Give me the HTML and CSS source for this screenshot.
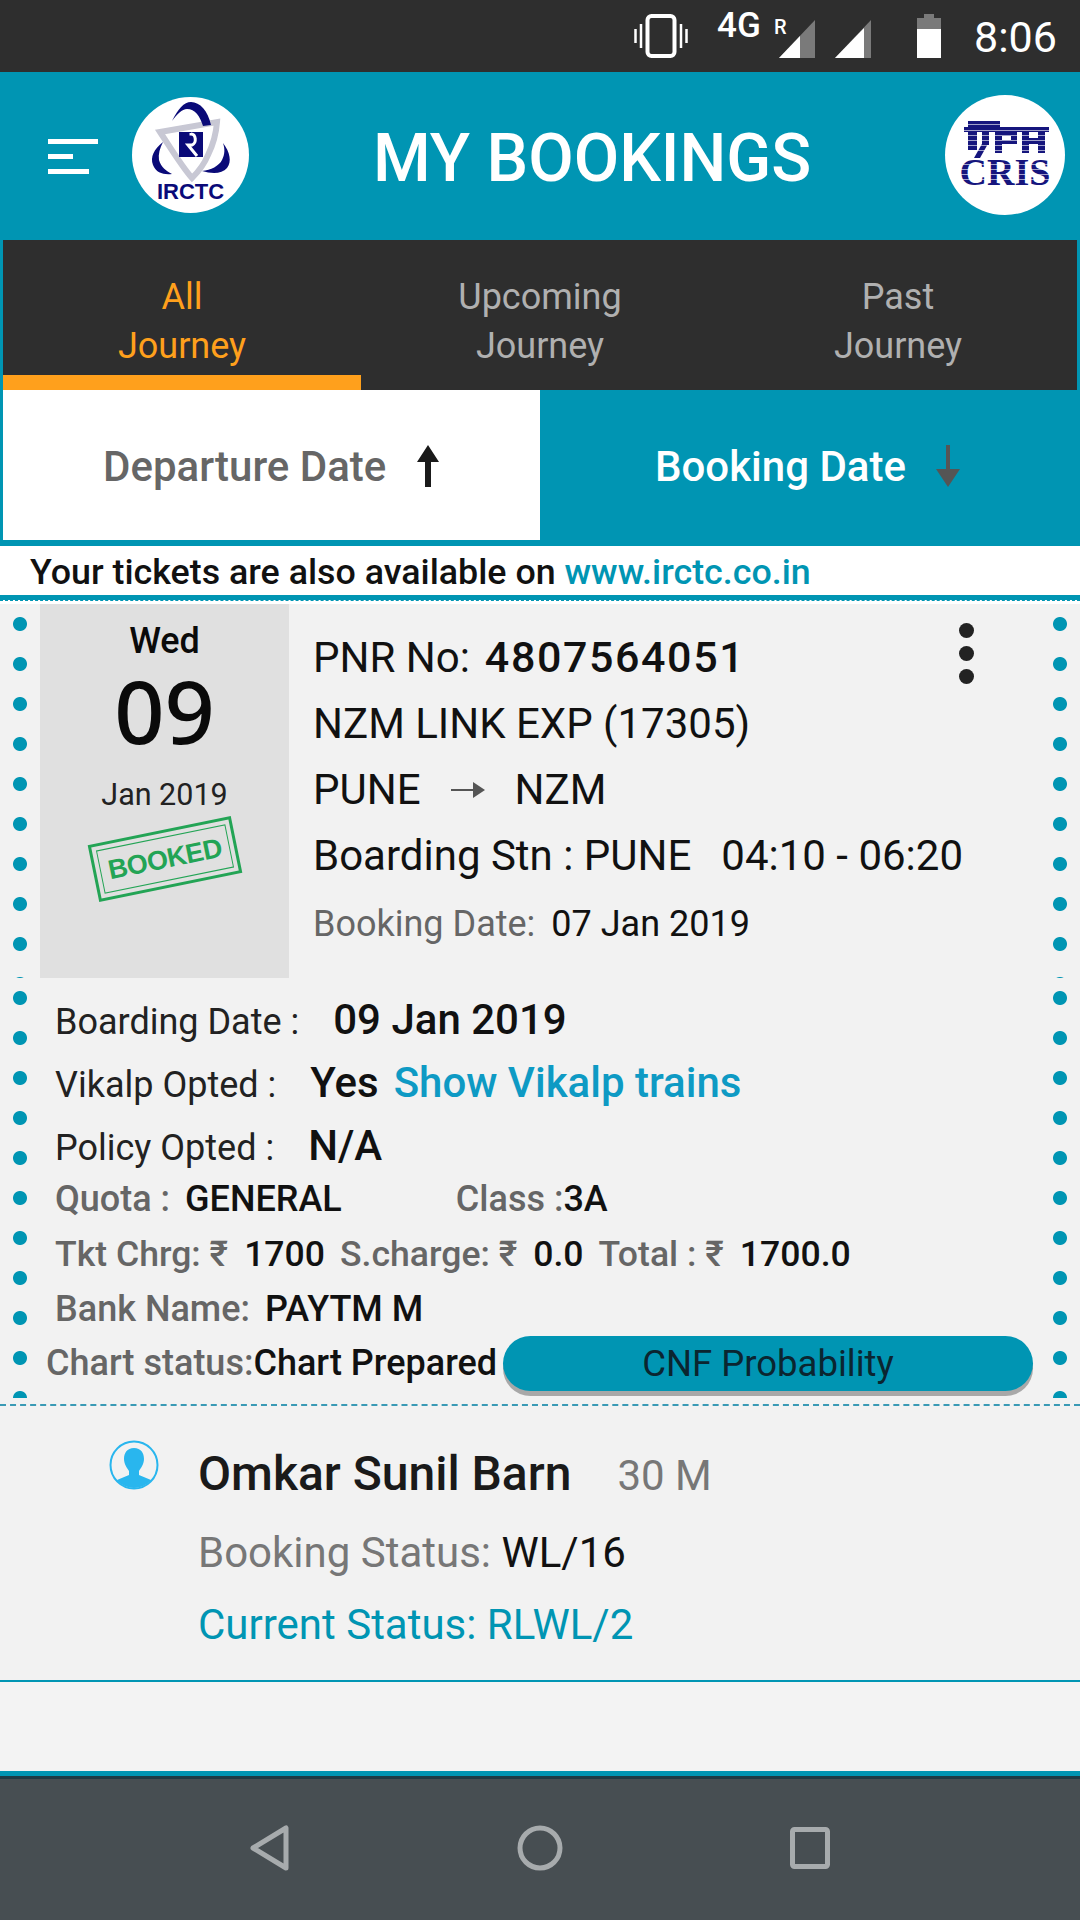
FILE: index.html
```html
<!DOCTYPE html>
<html lang="en">
<head>
<meta charset="utf-8">
<title>My Bookings</title>
<link rel="stylesheet" href="styles.css">
</head>
<body>
<div class="app">
  <div class="status">
    <svg class="ic-vib" width="54" height="44" viewBox="0 0 54 44"><rect x="13.500" y="2" width="27" height="40" rx="4" fill="none" stroke="#fff" stroke-width="4"/><path d="M7 10v24M1.500 15v14M47 10v24M52.500 15v14" stroke="#fff" stroke-width="2.500" fill="none"/></svg>
    <div class="net"><span class="net-g">4G</span><span class="net-r">R</span></div>
    <svg class="ic-sig1" width="36" height="38" viewBox="0 0 36 38"><path d="M36 0V38H0Z" fill="#7a7a7a"/><path d="M21 16V38H0Z" fill="#fff"/></svg>
    <svg class="ic-sig2" width="36" height="38" viewBox="0 0 36 38"><path d="M36 0V38H0Z" fill="#7a7a7a"/><path d="M29 8V38H0Z" fill="#fff"/></svg>
    <svg class="ic-bat" width="24" height="44" viewBox="0 0 24 44"><path d="M7 0h10v4h7v40H0V4h7Z" fill="#fff"/><path d="M7 0h10v4h7v11H0V4h7Z" fill="#7a7a7a"/></svg>
    <span class="time">8:06</span>
  </div>
  <header class="head">
    <div class="burger"><i class="b1"></i><i class="b2"></i><i class="b3"></i></div>
    <div class="logo logo-irctc">
      <svg width="117" height="116" viewBox="0 0 117 116">
        <path d="M28 35L85 25C84 38 80 50 76 58C72 68 66 75 60 81C50 70 38 50 28 35Z" fill="none" stroke="#c8c8d4" stroke-width="6"/>
        <path d="M40 24C46 12 52 5 59 5C68 5 76 14 79 28L71 29C68 19 63 12 55 12C50 12 45 17 40 24Z" fill="#0a0a78"/>
        <path d="M31 45C22 52 18 60 21 68C24 76 32 78 40 77C34 74 29 70 27 63C26 57 28 51 31 45Z" fill="#0a0a78"/>
        <path d="M91 46C98 55 100 65 95 71C90 77 80 77 70 74C79 73 87 69 90 63C93 57 93 52 91 46Z" fill="#0a0a78"/>
        <rect x="47" y="35" width="24" height="25" fill="#0a0a78"/>
        <path d="M59 36v1c5 0 6 9 1 11h-4l9 11" fill="none" stroke="#fff" stroke-width="3"/>
        <text x="58.500" y="102" text-anchor="middle" class="irctc-t">IRCTC</text>
      </svg>
    </div>
    <h1 class="title">MY BOOKINGS</h1>
    <div class="logo logo-cris">
      <svg width="120" height="120" viewBox="0 0 120 120">
        <g fill="#16167e">
          <rect x="23" y="26" width="32" height="6"/>
          <rect x="19" y="32" width="85" height="5"/>
          <rect x="23" y="37" width="9" height="18"/>
          <rect x="37" y="37" width="7" height="13"/>
          <path d="M38 47h6L35 63h-6Z"/>
          <rect x="50" y="37" width="7" height="21"/>
          <rect x="57" y="37" width="15" height="4"/>
          <rect x="66" y="41" width="6" height="8"/>
          <rect x="57" y="45" width="10" height="4"/>
          <rect x="77" y="37" width="7" height="21"/>
          <rect x="84" y="43" width="9" height="6"/>
          <rect x="93" y="37" width="7" height="21"/>
        </g>
        <text x="60" y="90" text-anchor="middle" class="cris-t">CRIS</text>
        <g fill="#fff" opacity=".6">
          <rect x="14" y="29" width="92" height="1"/>
          <rect x="14" y="35" width="92" height="1"/>
          <rect x="14" y="40" width="92" height="1"/>
          <rect x="14" y="45" width="92" height="1"/>
          <rect x="14" y="50" width="92" height="1"/>
          <rect x="14" y="55" width="92" height="1"/>
          <rect x="14" y="69" width="92" height="1"/>
          <rect x="14" y="74" width="92" height="1"/>
          <rect x="14" y="79" width="92" height="1"/>
          <rect x="14" y="84" width="92" height="1"/>
        </g>
      </svg>
    </div>
  </header>
  <nav class="tabs">
    <div class="tab tab-on">All<br>Journey</div>
    <div class="tab">Upcoming<br>Journey</div>
    <div class="tab">Past<br>Journey</div>
  </nav>
  <div class="sort">
    <div class="sort-btn sort-dep">
      <span>Departure Date</span>
      <svg width="22" height="42" viewBox="0 0 22 42"><path d="M11 0L22 17H14V42H8V17H0Z" fill="#1a1a1a"/></svg>
    </div>
    <div class="sort-btn sort-book">
      <span>Booking Date</span>
      <svg width="24" height="42" viewBox="0 0 24 42"><path d="M14 0V24H24L12 42L0 24H10V0Z" fill="#555"/></svg>
    </div>
  </div>
  <div class="notice">Your tickets are also available on <a class="link">www.irctc.co.in</a></div>
  <section class="ticket">
    <div class="top dots">
      <div class="datebox">
        <div class="d-day">Wed</div>
        <div class="d-num">09</div>
        <div class="d-my">Jan 2019</div>
        <div class="stamp"><span>BOOKED</span></div>
      </div>
      <div class="info">
        <div class="i-row i-pnr">PNR No:<b>4807564051</b></div>
        <div class="i-row">NZM LINK EXP (17305)</div>
        <div class="i-row i-route">PUNE
          <svg width="34" height="16" viewBox="0 0 34 16"><path d="M0 7h22V0l12 8-12 8V9H0Z" fill="#555"/></svg>
          NZM</div>
        <div class="i-row i-board"><span>Boarding Stn : PUNE</span><span>04:10 - 06:20</span></div>
        <div class="i-row i-bdate"><span class="grey">Booking Date:</span><span>07 Jan 2019</span></div>
      </div>
      <div class="kebab"><i></i><i></i><i></i></div>
    </div>
    <div class="bottom dots">
      <div class="b-row b-l1"><span class="lab">Boarding Date :</span><b class="val">09 Jan 2019</b></div>
      <div class="b-row b-l2"><span class="lab">Vikalp Opted :</span><b class="val">Yes</b><b class="vik">Show Vikalp trains</b></div>
      <div class="b-row b-l3"><span class="lab">Policy Opted :</span><b class="val">N/A</b></div>
      <div class="b-row b-m1"><span class="mg">Quota :</span><span class="mk q">GENERAL</span><span class="mg cl">Class :</span><span class="mk">3A</span></div>
      <div class="b-row b-m2"><span class="mg">Tkt Chrg: ₹</span><span class="mk a1">1700</span><span class="mg a2">S.charge: ₹</span><span class="mk a1">0.0</span><span class="mg a2">Total : ₹</span><span class="mk a1">1700.0</span></div>
      <div class="b-row b-m3"><span class="mg">Bank Name:</span><span class="mk a3">PAYTM M</span></div>
      <div class="b-chart"><span class="chart-t"><span class="mg">Chart status:</span><span class="mk">Chart Prepared</span></span><button class="cnf">CNF Probability</button></div>
    </div>
    <div class="pax">
      <svg class="pax-ic" width="50" height="50" viewBox="0 0 50 50"><defs><clipPath id="pc"><circle cx="25" cy="25" r="23"/></clipPath></defs><circle cx="25" cy="25" r="23.500" fill="none" stroke="#29b6ee" stroke-width="2"/><g clip-path="url(#pc)" fill="#29b6ee"><path d="M25 8c7 0 10 5 10 11c0 5-3 9-5 12v4l12 5v10H8V40l12-5v-4c-2-3-5-7-5-12c0-6 3-11 10-11Z"/></g></svg>
      <div class="pax-txt">
        <div class="pax-name"><b>Omkar Sunil Barn</b><span>30 M</span></div>
        <div class="pax-st"><span class="g2">Booking Status:</span> WL/16</div>
        <div class="pax-cur">Current Status: RLWL/2</div>
      </div>
    </div>
  </section>
  <div class="spacer"></div>
  <footer class="navbar">
    <svg width="40" height="48" viewBox="0 0 40 48"><path d="M36 4V44L3 24Z" fill="none" stroke="#a7abad" stroke-width="5" stroke-linejoin="round"/></svg>
    <svg width="46" height="46" viewBox="0 0 46 46"><circle cx="23" cy="23" r="20" fill="none" stroke="#a7abad" stroke-width="5"/></svg>
    <svg width="40" height="42" viewBox="0 0 40 42"><rect x="2.500" y="2.500" width="35" height="37" rx="2" fill="none" stroke="#a7abad" stroke-width="5"/></svg>
  </footer>
</div>
</body>
</html>
```
FILE: styles.css
```css
*{box-sizing:border-box}
html,body{margin:0;padding:0}
body{width:1080px;height:1920px;overflow:hidden;font-family:Roboto,"Liberation Sans",sans-serif;color:#111;background:#fff}
.app{width:1080px;height:1920px;display:flex;flex-direction:column}
.status{height:72px;background:#2e2e2e;display:flex;align-items:flex-start;color:#fff;padding-left:634px}
.ic-vib{margin-top:14px;width:54px}
.net{margin-left:29px;margin-top:8px;width:64px;display:flex;position:relative}
.net-g{font-size:35px;font-weight:500;line-height:36px}
.net-r{font-size:20px;font-weight:500;position:absolute;left:57px;top:8px;line-height:22px}
.ic-sig1{margin-top:20px;margin-left:-2px}
.ic-sig2{margin-top:20px;margin-left:20px}
.ic-bat{margin-top:14px;margin-left:46px}
.time{font-size:43px;line-height:50px;margin-top:12px;margin-left:33px}
.head{height:168px;background:#0095b3;display:flex;align-items:center;position:relative;padding-left:48px}
.burger{width:50px;display:flex;flex-direction:column;gap:10px}
.burger i{display:block;height:5px;background:#fff}
.b1{width:50px}.b2{width:25px}.b3{width:41px}
.logo{background:#fff;border-radius:50%;flex:none;overflow:hidden;display:flex}
.logo-irctc{width:117px;height:116px;margin-left:34px;margin-top:-3px}
.irctc-t{font-family:"Liberation Sans",sans-serif;font-weight:700;font-size:22px;fill:#0a0a78}
.cris-t{font-family:"Liberation Serif",serif;font-weight:700;font-size:38px;fill:#16167e}
.title{margin:5px 0 0 120px;width:482px;font-size:66px;line-height:80px;font-weight:500;color:#fff;text-align:left;white-space:nowrap;padding-left:4px}
.logo-cris{width:120px;height:120px;position:absolute;left:945px;top:23px}
.tabs{height:150px;margin:0;background:#2e2e2e;display:grid;grid-template-columns:repeat(3,1fr);border-left:3px solid #0095b3;border-right:3px solid #0095b3}
.tab{font-size:36px;line-height:49px;color:#b0b0b0;text-align:center;padding-top:33px;height:150px}
.tab-on{color:#ffa01c;border-bottom:15px solid #ffa01c}
.sort{height:156px;background:#0095b3;display:grid;grid-template-columns:537px 540px;padding-left:3px;align-items:start}
.sort-btn{height:150px;display:flex;align-items:center;font-size:42px;font-weight:500;padding-top:2px}
.sort-dep{background:#fff;color:#666;padding-left:100px;gap:31px}
.sort-book{color:#fff;padding-left:115px;gap:30px}
.notice{height:49px;background:#fff;font-size:35.800px;font-weight:500;line-height:52px;padding-left:30px;color:#111;white-space:nowrap}
.link{color:#0095b3}
.ticket{border-top:5px solid #0095b3;background:#f2f2f2;display:flex;flex-direction:column}
.ticket::before{content:"";display:block;height:3px;background:#fff;border-top:1px dashed #0095b3}
.dots{background-image:radial-gradient(circle,#0095b3 6.500px,transparent 7.500px),radial-gradient(circle,#0095b3 6.500px,transparent 7.500px);background-size:40px 40px,40px 40px;background-repeat:repeat-y,repeat-y;background-position:0 0,1040px 0}
.top{height:374px;display:flex;position:relative}
.datebox{width:249px;margin-left:40px;background:#e0e0e0;display:flex;flex-direction:column;align-items:center;position:relative}
.d-day{font-size:36px;font-weight:500;line-height:40px;margin-top:17px;color:#0a0a0a}
.d-num{font-family:"Noto Sans",sans-serif;font-size:88px;font-weight:500;line-height:84px;margin-top:7px;color:#0a0a0a}
.d-my{font-size:30.500px;line-height:36px;color:#222;margin-top:25px}
.stamp{position:absolute;left:52px;top:226px;width:146px;height:58px;border:3px solid #23a455;outline:1px solid #23a455;outline-offset:-8px;transform:rotate(-11.500deg);display:flex;align-items:center;justify-content:center;color:#23a455;font-family:"Liberation Sans",sans-serif;font-size:27px;font-weight:700;letter-spacing:-.5px}
.info{margin-left:24px;padding-top:20px;display:flex;flex-direction:column}
.i-row{font-size:42px;line-height:66px;white-space:nowrap;color:#111}
.i-pnr b{font-size:43px;font-weight:500;letter-spacing:1.600px;margin-left:15px}
.i-route{display:flex;align-items:center}
.i-route svg{margin:0 30px}
.i-board{display:flex;gap:30px}
.i-bdate{font-size:36px;line-height:70px;display:flex;gap:16px}
.grey{color:#666}
.kebab{position:absolute;left:959px;top:19px;display:flex;flex-direction:column;gap:8px}
.kebab i{display:block;width:15px;height:15px;border-radius:50%;background:#222}
.bottom{height:420px;padding:5px 0 0 55px;display:flex;flex-direction:column}
.b-row{display:flex;align-items:baseline;white-space:nowrap}
.b-l1{height:62px;padding-top:12px}
.b-l2{height:62px;padding-top:13px}
.b-l3{height:71px;padding-top:14px}
.lab{font-size:36px;color:#222}
.val{font-size:42px;font-weight:500;color:#111;margin-left:34px}
.vik{font-size:42px;font-weight:500;color:#0e9ac4;margin-left:15px}
.b-m1,.b-m2,.b-m3{font-size:36px;font-weight:500;height:55px}
.b-m2{font-size:35.600px}
.b-m3{height:45px}
.mg{color:#666}
.mk{color:#111}
.q{margin-left:15px}
.cl{margin-left:114px}
.a1{margin-left:16px}
.a2{margin-left:15px}
.a3{margin-left:15px}
.b-chart{display:flex;align-items:center;margin-left:-9px;height:60px;font-size:36px;font-weight:500;white-space:nowrap}
.chart-t{width:457px;display:block}
.cnf{width:530px;height:55px;border:0;border-radius:28px;background:#0095b3;box-shadow:0 5px 0 #a8a8a8;color:#0b2530;font:400 36.500px Roboto,sans-serif;padding:0}
.pax{border-top:2px dashed #3a9ab5;height:278px;margin-top:6px;display:flex;padding-left:109px;border-bottom:2px solid #0095b3;background:#f2f2f2}
.pax-ic{margin-top:34px;flex:none}
.pax-txt{margin-left:39px}
.pax-name{display:flex;align-items:baseline;margin-top:38px;line-height:60px}
.pax-name b{font-size:48px;font-weight:500;color:#1a1a1a}
.pax-name span{font-size:42px;color:#777;margin-left:46px}
.pax-st{font-size:42px;line-height:72px;margin-top:11px;color:#111}
.g2{color:#777}
.pax-cur{font-size:42px;line-height:72px;color:#0095b3}
.spacer{flex:1;background:#f3f3f3}
.navbar{height:149px;background:#474e52;border-top:5px solid #0095b3;box-shadow:inset 0 3px 0 #1e3a44;display:grid;grid-template-columns:repeat(3,270px);justify-content:center;justify-items:center;align-items:center}
```
